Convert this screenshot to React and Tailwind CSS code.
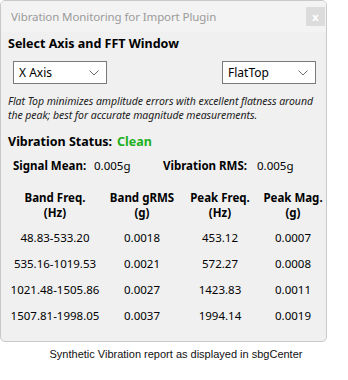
import React from "react";

const font = { fontFamily: '"Noto Sans", "Open Sans", sans-serif' };

function Chevron() {
  return (
    <svg width="10" height="6" viewBox="0 0 10 6" className="shrink-0">
      <path d="M0.5 0.5 L5 5 L9.5 0.5" fill="none" stroke="#6b6b6b" strokeWidth="1" />
    </svg>
  );
}

function Select({ label }) {
  return (
    <div className="w-[94px] h-[23px] bg-white border border-[#7a7a7a] flex items-center justify-between pl-[5px] pr-[7px]">
      <span className="text-[12px] text-black leading-none">{label}</span>
      <Chevron />
    </div>
  );
}

const rows = [
  ["48.83-533.20", "0.0018", "453.12", "0.0007"],
  ["535.16-1019.53", "0.0021", "572.27", "0.0008"],
  ["1021.48-1505.86", "0.0027", "1423.83", "0.0011"],
  ["1507.81-1998.05", "0.0037", "1994.14", "0.0019"],
];

const headers = [
  ["Band Freq.", "(Hz)"],
  ["Band gRMS", "(g)"],
  ["Peak Freq.", "(Hz)"],
  ["Peak Mag.", "(g)"],
];

const cols = "grid grid-cols-[92px_82px_74px_72px]";

export default function App() {
  return (
    <div className="w-[348px] h-[380px] bg-white" style={font}>
      <div className="w-[327px] h-[342px] border border-[#c9c9c9] rounded-[5px] bg-[#f0f0f0] overflow-hidden flex flex-col">
        <div className="h-[31px] bg-[#f3f3f3] flex items-center justify-between pl-[10px] pr-[1px] shrink-0">
          <span className="text-[11.5px] text-[#9a9a9a] leading-none tracking-[-0.1px]">Vibration Monitoring for Import Plugin</span>
          <div className="w-[19px] h-[19px] bg-[#dcdcdc] flex items-center justify-center text-white text-[11px] leading-none font-bold">x</div>
        </div>
        <div className="flex flex-col pl-[7px] pr-[2px]">
          <div className="mt-[4px] text-[12.5px] font-bold text-black leading-[16px]">Select Axis and FFT Window</div>
          <div className="mt-[9px] flex justify-between pl-[5px] pr-[8px]">
            <Select label="X Axis" />
            <Select label="FlatTop" />
          </div>
          <div className="mt-[11px] text-[10.5px] italic text-[#222] leading-[13.5px] tracking-[-0.05px]">
            Flat Top minimizes amplitude errors with excellent flatness around the peak; best for accurate magnitude measurements.
          </div>
          <div className="mt-[12px] flex items-center text-[12.5px] font-bold leading-[16px]">
            <span className="text-black">Vibration Status:</span>
            <span className="ml-[5px] text-[#20b020]">Clean</span>
          </div>
          <div className="mt-[8px] pl-[5px] flex items-center text-[11.5px] leading-[16px]">
            <span className="font-bold text-black w-[81px]">Signal Mean:</span>
            <span className="text-black w-[69px]">0.005g</span>
            <span className="font-bold text-black w-[94px]">Vibration RMS:</span>
            <span className="text-black">0.005g</span>
          </div>
          <div className={`${cols} mt-[16px] text-[11.5px] font-bold text-black leading-[15px] text-center pl-[1px]`}>
            {headers.map((h, i) => (
              <div key={i} className="flex flex-col items-center">
                <span>{h[0]}</span>
                <span>{h[1]}</span>
              </div>
            ))}
          </div>
          <div className="mt-[5px] flex flex-col">
            {rows.map((r, i) => (
              <div key={i} className={`${cols} h-[26px] items-center text-[11.5px] text-black text-center pl-[1px]`}>
                {r.map((c, j) => (
                  <span key={j}>{c}</span>
                ))}
              </div>
            ))}
          </div>
        </div>
      </div>
      <div className="w-[352px] text-center text-[11px] text-[#111] mt-[4px]" style={{ fontFamily: '"Liberation Sans", Arial, sans-serif' }}>
        Synthetic Vibration report as displayed in sbgCenter
      </div>
    </div>
  );
}
